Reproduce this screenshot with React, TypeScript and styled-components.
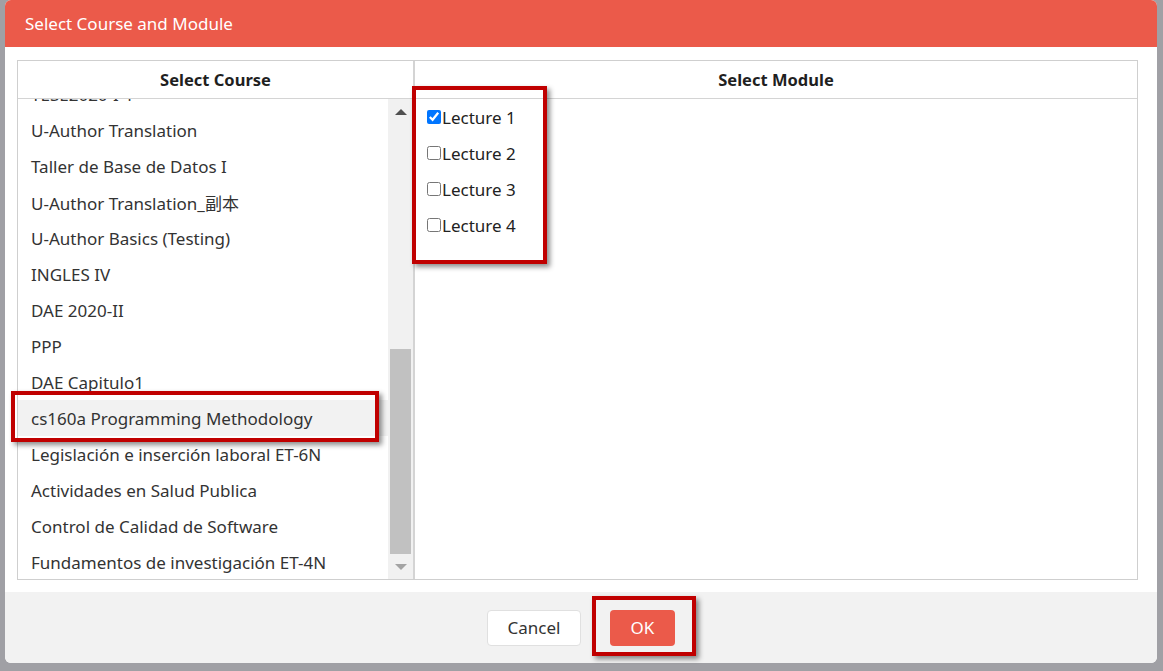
import React, { useLayoutEffect, useRef } from 'react'
import styled, { createGlobalStyle } from 'styled-components'

const coral = '#eb5a4a'
const markRed = '#c00000'
const fontStack = `"Noto Sans", "Noto Sans CJK SC", sans-serif`

const GlobalStyle = createGlobalStyle`
  html, body {
    margin: 0;
    padding: 0;
    background: #a0a0a5;
    font-family: ${fontStack};
  }
`

const Page = styled.div`
  position: relative;
  width: 1163px;
  height: 671px;
  padding-left: 5px;
  box-sizing: border-box;
  overflow: hidden;
`

const Dialog = styled.div`
  width: 1152px;
  height: 663px;
  display: flex;
  flex-direction: column;
  border-radius: 6px;
  overflow: hidden;
  background: #fff;
`

const Header = styled.div`
  height: 47px;
  flex: none;
  display: flex;
  align-items: center;
  padding-left: 20px;
  background: ${coral};
  color: #fff;
  font-size: 17px;
`

const Body = styled.div`
  flex: 1;
  min-height: 0;
  display: flex;
  padding: 13px 19px 12px 12px;
`

const Table = styled.div`
  flex: 1;
  display: grid;
  grid-template-columns: 397px 1fr;
  grid-template-rows: minmax(0, 1fr);
  border: 1px solid #cfcfcf;
`

const Column = styled.div<{ $divider?: boolean }>`
  display: flex;
  flex-direction: column;
  min-height: 0;
  overflow: hidden;
  ${({ $divider }) => ($divider ? 'border-right: 2px solid #d4d4d4;' : '')}
`

const ColumnTitle = styled.div`
  height: 37px;
  flex: none;
  display: flex;
  align-items: center;
  justify-content: center;
  border-bottom: 1px solid #d4d4d4;
  font-size: 16.5px;
  font-weight: 700;
  color: #1f1f1f;
`

const ListArea = styled.div`
  flex: 1;
  display: flex;
  min-height: 0;
`

const CourseList = styled.div`
  flex: 1;
  overflow: hidden;
`

const CourseRow = styled.div<{ $selected?: boolean }>`
  height: 36px;
  display: flex;
  align-items: center;
  padding-left: 13px;
  font-size: 17px;
  color: #333;
  white-space: nowrap;
  background: ${({ $selected }) => ($selected ? '#f2f2f2' : 'transparent')};
`

const ScrollBar = styled.div`
  width: 25px;
  flex: none;
  display: flex;
  flex-direction: column;
  background: #f1f1f1;
`

const ScrollButton = styled.div<{ $down?: boolean; $disabled?: boolean }>`
  height: 25px;
  flex: none;
  display: flex;
  align-items: center;
  justify-content: center;
  &::after {
    content: '';
    width: 0;
    height: 0;
    border-left: 6px solid transparent;
    border-right: 6px solid transparent;
    ${({ $down, $disabled }) =>
      $down
        ? `border-top: 6px solid ${$disabled ? '#a3a3a3' : '#505050'};`
        : `border-bottom: 6px solid ${$disabled ? '#a3a3a3' : '#505050'};`}
  }
`

const ScrollTrack = styled.div`
  flex: 1;
  display: flex;
  flex-direction: column;
  justify-content: flex-end;
  padding: 0 2px;
`

const ScrollThumb = styled.div`
  height: 205px;
  background: #c1c1c1;
`

const ModuleList = styled.div`
  flex: 1;
  padding: 0 0 0 12px;
`

const ModuleRow = styled.label`
  height: 36px;
  display: flex;
  align-items: center;
  font-size: 17px;
  color: #222;
`

const CheckBox = styled.input`
  width: 14px;
  height: 14px;
  margin: 0 1px 0 0;
  accent-color: #0075ff;
`

const Footer = styled.div`
  height: 71px;
  flex: none;
  display: flex;
  align-items: center;
  justify-content: center;
  gap: 29px;
  background: #f2f2f2;
`

const Button = styled.button<{ $primary?: boolean }>`
  height: 36px;
  padding: 0;
  border-radius: 4px;
  font-family: ${fontStack};
  font-size: 17px;
  cursor: pointer;
  ${({ $primary }) =>
    $primary
      ? `width: 65px; background: ${coral}; color: #fff; border: none;`
      : `width: 94px; background: #fff; color: #333; border: 1px solid #e0e0e0;`}
`

// red annotation frames drawn over the screenshot
const Mark = styled.div`
  position: absolute;
  box-sizing: border-box;
  border: 4px solid ${markRed};
  box-shadow: 3px 3px 5px rgba(0, 0, 0, 0.45);
  pointer-events: none;
`

const courses = [
  'TESE2020-I-1',
  'U-Author Translation',
  'Taller de Base de Datos I',
  'U-Author Translation_副本',
  'U-Author Basics (Testing)',
  'INGLES IV',
  'DAE 2020-II',
  'PPP',
  'DAE Capitulo1',
  'cs160a Programming Methodology',
  'Legislación e inserción laboral ET-6N',
  'Actividades en Salud Publica',
  'Control de Calidad de Software',
  'Fundamentos de investigación ET-4N'
]

const modules = ['Lecture 1', 'Lecture 2', 'Lecture 3', 'Lecture 4']

const App: React.FC = () => {
  const listRef = useRef<HTMLDivElement>(null)

  useLayoutEffect(() => {
    if (listRef.current) listRef.current.scrollTop = 23
  }, [])

  return (
    <>
      <GlobalStyle />
      <Page>
        <Dialog>
          <Header>Select Course and Module</Header>
          <Body>
            <Table>
              <Column $divider>
                <ColumnTitle>Select Course</ColumnTitle>
                <ListArea>
                  <CourseList ref={listRef}>
                    {courses.map((name) => (
                      <CourseRow key={name} $selected={name.startsWith('cs160a')}>
                        {name}
                      </CourseRow>
                    ))}
                  </CourseList>
                  <ScrollBar>
                    <ScrollButton />
                    <ScrollTrack>
                      <ScrollThumb />
                    </ScrollTrack>
                    <ScrollButton $down $disabled />
                  </ScrollBar>
                </ListArea>
              </Column>
              <Column>
                <ColumnTitle>Select Module</ColumnTitle>
                <ModuleList>
                  {modules.map((m, i) => (
                    <ModuleRow key={m}>
                      <CheckBox type="checkbox" defaultChecked={i === 0} />
                      {m}
                    </ModuleRow>
                  ))}
                </ModuleList>
              </Column>
            </Table>
          </Body>
          <Footer>
            <Button>Cancel</Button>
            <Button $primary>OK</Button>
          </Footer>
        </Dialog>
        <Mark style={{ left: 11, top: 391, width: 368, height: 51 }} />
        <Mark style={{ left: 412, top: 86, width: 135, height: 178 }} />
        <Mark style={{ left: 592, top: 596, width: 104, height: 60 }} />
      </Page>
    </>
  )
}

export default App
